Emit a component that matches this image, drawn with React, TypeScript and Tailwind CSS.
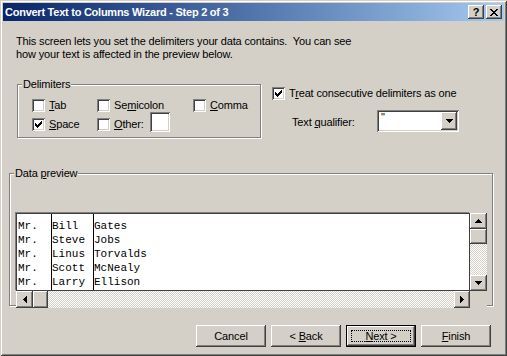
import React from "react";

const raised =
  "bg-[#d4d0c8] shadow-[inset_-1px_-1px_#404040,inset_1px_1px_#fff,inset_-2px_-2px_#808080,inset_2px_2px_#d4d0c8]";
const sunken =
  "shadow-[inset_1px_1px_#808080,inset_-1px_-1px_#fff,inset_2px_2px_#404040,inset_-2px_-2px_#d4d0c8]";
const checker =
  "bg-[#d4d0c8] bg-[repeating-conic-gradient(#ffffff_0_25%,#d4d0c8_0_50%)] bg-[length:2px_2px]";

const CheckMark = () => (
  <svg className="absolute left-[3px] top-[3px]" width="7" height="7" viewBox="0 0 7 7" shapeRendering="crispEdges">
    <rect x="6" y="0" width="1" height="1" fill="#000" />
    <rect x="5" y="1" width="2" height="1" fill="#000" />
    <rect x="0" y="2" width="1" height="1" fill="#000" />
    <rect x="4" y="2" width="3" height="1" fill="#000" />
    <rect x="0" y="3" width="2" height="1" fill="#000" />
    <rect x="3" y="3" width="3" height="1" fill="#000" />
    <rect x="0" y="4" width="5" height="1" fill="#000" />
    <rect x="1" y="5" width="3" height="1" fill="#000" />
    <rect x="2" y="6" width="1" height="1" fill="#000" />
  </svg>
);

const Check = ({ checked }: { checked?: boolean }) => (
  <span className={`relative inline-block w-[13px] h-[13px] bg-white shrink-0 ${sunken}`}>
    {checked && <CheckMark />}
  </span>
);

const U = ({ children }: { children: React.ReactNode }) => (
  <span className="underline underline-offset-[1px] decoration-1">{children}</span>
);

const CheckItem = ({
  checked,
  children,
  className = "",
}: {
  checked?: boolean;
  children: React.ReactNode;
  className?: string;
}) => (
  <div className={`flex items-center ${className}`}>
    <Check checked={checked} />
    <span className="ml-[4px] text-[11px] leading-[13px] whitespace-nowrap">{children}</span>
  </div>
);

const Arrow = ({ dir }: { dir: "up" | "down" | "left" | "right" }) => {
  const paths: Record<string, string> = {
    up: "M3 0h1v1h1v1h1v1h1v1H0V3h1V2h1V1h1z",
    down: "M0 0h7v1H6v1H5v1H4v1H3V3H2V2H1V1H0z",
    left: "M3 0h1v7H3V6H2V5H1V4H0V3h1V2h1V1h1z",
    right: "M0 0h1v1h1v1h1v1h1v1H3v1H2v1H1v1H0z",
  };
  const vertical = dir === "up" || dir === "down";
  return (
    <svg
      width={vertical ? 7 : 4}
      height={vertical ? 4 : 7}
      viewBox={vertical ? "0 0 7 4" : "0 0 4 7"}
      shapeRendering="crispEdges"
    >
      <path d={paths[dir]} fill="#000" />
    </svg>
  );
};

const ScrollBtn = ({ dir, className = "" }: { dir: "up" | "down" | "left" | "right"; className?: string }) => (
  <div className={`flex items-center justify-center shrink-0 ${raised} ${className}`}>
    <Arrow dir={dir} />
  </div>
);

const Group = ({
  label,
  className = "",
  children,
}: {
  label: React.ReactNode;
  className?: string;
  children?: React.ReactNode;
}) => (
  <div className={`relative border border-[#808080] shadow-[inset_1px_1px_#fff,1px_1px_#fff] ${className}`}>
    <span className="absolute -top-[7px] left-[4px] bg-[#d4d0c8] px-[1px] text-[11px] leading-[13px]">{label}</span>
    {children}
  </div>
);

const Button = ({ children, def }: { children: React.ReactNode; def?: boolean }) => (
  <div
    className={`relative w-[70px] h-[22px] flex items-center justify-center text-[11px] leading-[13px] ${
      def ? "border border-black" : ""
    } ${raised}`}
  >
    {def && <span className="absolute inset-[4px] border border-dotted border-black" />}
    <span>{children}</span>
  </div>
);

const rows = [
  ["Mr.", "Bill", "Gates"],
  ["Mr.", "Steve", "Jobs"],
  ["Mr.", "Linus", "Torvalds"],
  ["Mr.", "Scott", "McNealy"],
  ["Mr.", "Larry", "Ellison"],
];

const CloseGlyph = () => (
  <svg width="8" height="7" viewBox="0 0 8 7" shapeRendering="crispEdges">
    <path
      d="M0 0h2v1h1v1h2V1h1V0h2v1H7v1H6v1H5v1h1v1h1v1h1v1H6V6H5V5H3v1H2v1H0V6h1V5h1V4h1V3H2V2H1V1H0z"
      fill="#000"
    />
  </svg>
);

export default function App() {
  return (
    <div
      className="w-[507px] h-[356px] bg-[#d4d0c8] p-[3px] flex flex-col text-black tracking-[-0.15px] shadow-[inset_1px_1px_#d4d0c8,inset_-1px_-1px_#404040,inset_2px_2px_#fff,inset_-2px_-2px_#808080] overflow-hidden"
      style={{ fontFamily: '"Liberation Sans", Arial, sans-serif' }}
    >
      {/* Title bar */}
      <div className="h-[18px] shrink-0 flex items-center pl-[2px] pr-[2px] bg-gradient-to-r from-[#0a246a] to-[#a6caf0]">
        <span className="text-white font-bold text-[11px] leading-[13px] whitespace-nowrap tracking-[-0.25px]">
          Convert Text to Columns Wizard - Step 2 of 3
        </span>
        <div className="ml-auto flex gap-[2px]">
          <div className={`w-[16px] h-[14px] flex items-center justify-center ${raised}`}>
            <span className="font-bold text-[11px] leading-[11px] mt-[1px]">?</span>
          </div>
          <div className={`w-[16px] h-[14px] flex items-center justify-center ${raised}`}>
            <CloseGlyph />
          </div>
        </div>
      </div>

      {/* Content */}
      <div className="flex-1 flex flex-col">
        <p className="ml-[13px] mt-[14px] text-[11px] leading-[13px] whitespace-nowrap">
          This screen lets you set the delimiters your data contains.&nbsp; You can see
          <br />
          how your text is affected in the preview below.
        </p>

        <div className="flex mt-[23px]">
          <Group label="Delimiters" className="ml-[14px] w-[244px] h-[54px]">
            <div className="pl-[14px] pt-[14px] flex flex-col">
              <div className="flex items-center h-[13px]">
                <CheckItem className="w-[65px]">
                  <U>T</U>ab
                </CheckItem>
                <CheckItem className="w-[96px]">
                  Se<U>m</U>icolon
                </CheckItem>
                <CheckItem>
                  <U>C</U>omma
                </CheckItem>
              </div>
              <div className="flex items-center">
                <CheckItem checked className="w-[65px]">
                  <U>S</U>pace
                </CheckItem>
                <CheckItem>
                  <U>O</U>ther:
                </CheckItem>
                <div className={`ml-[6px] mb-[4px] w-[20px] h-[20px] bg-white ${sunken}`} />
              </div>
            </div>
          </Group>

          <div className="ml-[11px] mt-[3px] flex flex-col">
            <CheckItem checked>
              T<U>r</U>eat consecutive delimiters as one
            </CheckItem>
            <div className="flex items-center mt-[10px]">
              <span className="ml-[20px] w-[85px] text-[11px] leading-[13px] mt-[2px]">
                Text <U>q</U>ualifier:
              </span>
              <div className={`relative w-[82px] h-[22px] bg-white flex p-[2px] ${sunken}`}>
                <span className="pl-[2px] text-[11px] leading-[11px]">"</span>
                <ScrollBtn dir="down" className="ml-auto w-[16px] h-[18px]" />
              </div>
            </div>
          </div>
        </div>

        <Group label={<>Data <U>p</U>review</>} className="ml-[6px] mt-[35px] w-[484px] h-[133px]">
          <div className="pl-[6px] pt-[39px]">
            <div className="flex flex-col w-[471px]">
              <div className="flex h-[78px]">
                <div className="w-[454px] h-full bg-white border border-[#404040] shadow-[-1px_-1px_#808080] flex font-['Liberation_Mono',monospace] text-[11px] leading-[14px] tracking-normal">
                  <div className="w-[35px] border-r border-black pl-[1px] pt-[5px]">
                    {rows.map((r, i) => (
                      <div key={i}>{r[0]}</div>
                    ))}
                  </div>
                  <div className="w-[42px] border-r border-black pt-[5px]">
                    {rows.map((r, i) => (
                      <div key={i}>{r[1]}</div>
                    ))}
                  </div>
                  <div className="flex-1 pt-[5px]">
                    {rows.map((r, i) => (
                      <div key={i}>{r[2]}</div>
                    ))}
                  </div>
                </div>
                <div className="w-[17px] h-full flex flex-col">
                  <ScrollBtn dir="up" className="h-[16px]" />
                  <div className={`h-[15px] shrink-0 ${raised}`} />
                  <div className={`flex-1 ${checker}`} />
                  <ScrollBtn dir="down" className="h-[16px]" />
                </div>
              </div>
              <div className="flex h-[17px]">
                <div className="w-[454px] h-full flex">
                  <ScrollBtn dir="left" className="w-[17px]" />
                  <div className={`w-[15px] shrink-0 ${raised}`} />
                  <div className={`flex-1 ${checker}`} />
                  <ScrollBtn dir="right" className="w-[16px]" />
                </div>
                <div className="w-[17px] h-full bg-[#d4d0c8]" />
              </div>
            </div>
          </div>
        </Group>

        <div className="flex justify-end gap-[5px] pr-[13px] mt-[19px]">
          <Button>Cancel</Button>
          <Button>
            &lt; <U>B</U>ack
          </Button>
          <Button def>
            <U>N</U>ext &gt;
          </Button>
          <Button>
            <U>F</U>inish
          </Button>
        </div>
      </div>
    </div>
  );
}
